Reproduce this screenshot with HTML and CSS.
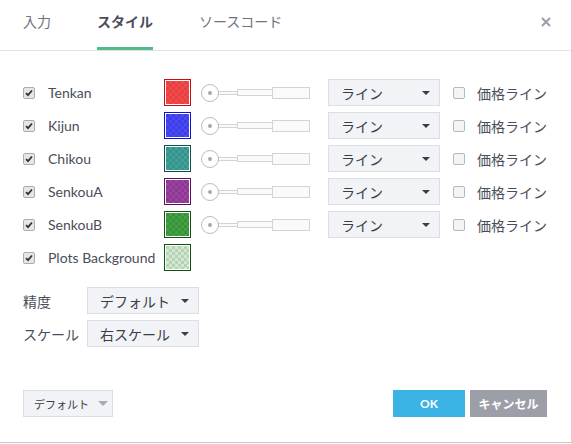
FILE: index.html
```html
<!DOCTYPE html>
<html lang="ja">
<head>
<meta charset="utf-8">
<link rel="stylesheet" href="styles.css">
</head>
<body>
<div class="dialog">
  <div class="header">
    <div class="tabs">
      <span class="tab">入力</span>
      <span class="tab active">スタイル</span>
      <span class="tab">ソースコード</span>
    </div>
    <svg class="close" width="10" height="10" viewBox="0 0 10 10"><path d="M1 1 L9 9 M9 1 L1 9" stroke="#9a9ea8" stroke-width="2"/></svg>
  </div>

  <div class="content">
    <div class="row">
      <span class="cb checked"><svg width="8" height="8" viewBox="0 0 8 8"><path d="M1 4.2 L3 6.2 L7 1.5" fill="none" stroke="#333" stroke-width="1.8"/></svg></span>
      <span class="label">Tenkan</span>
      <span class="swatch s-red"><span class="fill"></span></span>
      <span class="slider"><span class="knob"></span><span class="bar b1"></span><span class="bar b2"></span><span class="bar b3"></span></span>
      <span class="select wide"><span class="val">ライン</span><span class="arrow"></span></span>
      <span class="cb"></span>
      <span class="pl">価格ライン</span>
    </div>
    <div class="row">
      <span class="cb checked"><svg width="8" height="8" viewBox="0 0 8 8"><path d="M1 4.2 L3 6.2 L7 1.5" fill="none" stroke="#333" stroke-width="1.8"/></svg></span>
      <span class="label">Kijun</span>
      <span class="swatch s-blue"><span class="fill"></span></span>
      <span class="slider"><span class="knob"></span><span class="bar b1"></span><span class="bar b2"></span><span class="bar b3"></span></span>
      <span class="select wide"><span class="val">ライン</span><span class="arrow"></span></span>
      <span class="cb"></span>
      <span class="pl">価格ライン</span>
    </div>
    <div class="row">
      <span class="cb checked"><svg width="8" height="8" viewBox="0 0 8 8"><path d="M1 4.2 L3 6.2 L7 1.5" fill="none" stroke="#333" stroke-width="1.8"/></svg></span>
      <span class="label">Chikou</span>
      <span class="swatch s-teal"><span class="fill"></span></span>
      <span class="slider"><span class="knob"></span><span class="bar b1"></span><span class="bar b2"></span><span class="bar b3"></span></span>
      <span class="select wide"><span class="val">ライン</span><span class="arrow"></span></span>
      <span class="cb"></span>
      <span class="pl">価格ライン</span>
    </div>
    <div class="row">
      <span class="cb checked"><svg width="8" height="8" viewBox="0 0 8 8"><path d="M1 4.2 L3 6.2 L7 1.5" fill="none" stroke="#333" stroke-width="1.8"/></svg></span>
      <span class="label">SenkouA</span>
      <span class="swatch s-purple"><span class="fill"></span></span>
      <span class="slider"><span class="knob"></span><span class="bar b1"></span><span class="bar b2"></span><span class="bar b3"></span></span>
      <span class="select wide"><span class="val">ライン</span><span class="arrow"></span></span>
      <span class="cb"></span>
      <span class="pl">価格ライン</span>
    </div>
    <div class="row">
      <span class="cb checked"><svg width="8" height="8" viewBox="0 0 8 8"><path d="M1 4.2 L3 6.2 L7 1.5" fill="none" stroke="#333" stroke-width="1.8"/></svg></span>
      <span class="label">SenkouB</span>
      <span class="swatch s-green"><span class="fill"></span></span>
      <span class="slider"><span class="knob"></span><span class="bar b1"></span><span class="bar b2"></span><span class="bar b3"></span></span>
      <span class="select wide"><span class="val">ライン</span><span class="arrow"></span></span>
      <span class="cb"></span>
      <span class="pl">価格ライン</span>
    </div>
    <div class="row">
      <span class="cb checked"><svg width="8" height="8" viewBox="0 0 8 8"><path d="M1 4.2 L3 6.2 L7 1.5" fill="none" stroke="#333" stroke-width="1.8"/></svg></span>
      <span class="label">Plots Background</span>
      <span class="swatch s-bg"><span class="fill"></span></span>
    </div>

    <div class="row first-field">
      <span class="flabel">精度</span>
      <span class="select wide"><span class="val">デフォルト</span><span class="arrow"></span></span>
    </div>
    <div class="row">
      <span class="flabel">スケール</span>
      <span class="select wide"><span class="val">右スケール</span><span class="arrow"></span></span>
    </div>
  </div>

  <div class="footer">
    <span class="defbtn">デフォルト<span class="arrow light"></span></span>
    <div class="actions">
      <span class="btn ok">OK</span>
      <span class="btn cancel">キャンセル</span>
    </div>
  </div>
</div>
</body>
</html>
```
FILE: styles.css
```css
* { box-sizing: border-box; }
html, body { margin: 0; padding: 0; background: #fff; }
body {
  font-family: Lato, "Noto Sans CJK JP", sans-serif;
  font-size: 14px;
  color: #4a4e59;
  width: 571px;
  height: 444px;
  overflow: hidden;
}
.dialog {
  height: 443px;
  border-bottom: 1px solid #c4c6cb;
  display: flex;
  flex-direction: column;
}
.header {
  height: 51px;
  border-bottom: 1px solid #e0e3e8;
  display: flex;
  align-items: flex-start;
  justify-content: space-between;
  padding: 0 20px 0 23px;
}
.tabs { display: flex; gap: 46px; height: 50px; }
.tab {
  font-size: 14px;
  color: #6f737d;
  line-height: 20px;
  padding-top: 12px;
  height: 50px;
  border-bottom: 3px solid transparent;
}
.tab.active {
  font-weight: bold;
  color: #4a4e59;
  border-bottom-color: #53b987;
}
.close { margin-top: 17px; }

.content {
  padding: 25px 0 0 23px;
  display: flex;
  flex-direction: column;
}
.row {
  height: 33px;
  display: flex;
  align-items: center;
}
.row.first-field { margin-top: 10px; }
.cb {
  width: 12px;
  height: 12px;
  border: 1px solid #b5b8be;
  border-radius: 2px;
  background: #f4f4f4;
  display: flex;
  align-items: center;
  justify-content: center;
  flex: none;
}
.cb.checked { background: #e6e6e6; border-color: #a9acb2; }
.label { width: 116px; margin-left: 13px; color: #4a4e59; white-space: nowrap; }
.swatch {
  width: 27px;
  height: 27px;
  border: 1px solid;
  padding: 1px;
  background: #fff;
  flex: none;
}
.fill {
  display: block;
  width: 100%;
  height: 100%;
}
.s-red { border-color: #c41010; }
.s-red .fill { background: conic-gradient(#f04a4a 25%, #e84040 0 50%, #f04a4a 0 75%, #e84040 0) 0 0/6px 6px; }
.s-blue { border-color: #1010d0; }
.s-blue .fill { background: conic-gradient(#4a4af4 25%, #3e3ee8 0 50%, #4a4af4 0 75%, #3e3ee8 0) 0 0/6px 6px; }
.s-teal { border-color: #0f4f4a; }
.s-teal .fill { background: conic-gradient(#40a09a 25%, #36928c 0 50%, #40a09a 0 75%, #36928c 0) 0 0/6px 6px; }
.s-purple { border-color: #5a0f5e; }
.s-purple .fill { background: conic-gradient(#9a44a0 25%, #8c3892 0 50%, #9a44a0 0 75%, #8c3892 0) 0 0/6px 6px; }
.s-green { border-color: #0d520d; }
.s-green .fill { background: conic-gradient(#44a044 25%, #389238 0 50%, #44a044 0 75%, #389238 0) 0 0/6px 6px; }
.s-bg { border-color: #0d520d; }
.s-bg .fill { background: conic-gradient(#d2e6d2 25%, #b8d2b8 0 50%, #d2e6d2 0 75%, #b8d2b8 0) 0 0/6px 6px; }

.slider {
  margin-left: 10px;
  display: flex;
  align-items: center;
  width: 110px;
}
.knob {
  width: 18px;
  height: 18px;
  border: 1px solid #b9bcc3;
  border-radius: 50%;
  background: #fff;
  position: relative;
  flex: none;
}
.knob::after {
  content: "";
  position: absolute;
  left: 6px;
  top: 6px;
  width: 4px;
  height: 4px;
  border-radius: 50%;
  background: #a4a8b0;
}
.bar {
  background: #fafafa;
  border: 1px solid #d2d4d8;
  flex: none;
}
.b1 { width: 20px; height: 4px; margin-left: -1px; }
.b2 { width: 36px; height: 7px; margin-left: -1px; }
.b3 { width: 38px; height: 12px; margin-left: -1px; }

.select {
  height: 27px;
  background: #f1f3f6;
  border: 1px solid #dbdee4;
  display: flex;
  align-items: center;
  justify-content: space-between;
  padding: 0 9px 0 12px;
  color: #3a3d45;
  flex: none;
  white-space: nowrap;
}
.row .slider + .select { margin-left: 17px; }
.select.wide { width: 112px; }
.arrow {
  width: 0;
  height: 0;
  border-left: 4px solid transparent;
  border-right: 4px solid transparent;
  border-top: 4px solid #3a3d45;
}
.arrow.light { border-top-color: #a8abb2; margin-left: 9px; border-left-width: 5px; border-right-width: 5px; border-top-width: 5px; }
.select + .cb { margin-left: 13px; }
.pl { margin-left: 12px; color: #4a4e59; white-space: nowrap; }
.flabel { width: 64px; color: #4a4e59; white-space: nowrap; }

.footer {
  margin-top: auto;
  display: flex;
  justify-content: space-between;
  align-items: center;
  padding: 0 24px 25px 23px;
}
.defbtn {
  width: 90px;
  height: 27px;
  background: #f1f3f6;
  border: 1px solid #dbdee4;
  display: flex;
  align-items: center;
  padding-left: 10px;
  font-size: 11px;
  color: #3a3d45;
  white-space: nowrap;
}
.actions { display: flex; gap: 5px; }
.btn {
  height: 27px;
  display: flex;
  align-items: center;
  justify-content: center;
  color: #fff;
  font-weight: bold;
  font-size: 12px;
}
.ok { width: 72px; background: #3bb3e4; }
.cancel { width: 77px; background: #9c9fa7; font-size: 12px; }
```
